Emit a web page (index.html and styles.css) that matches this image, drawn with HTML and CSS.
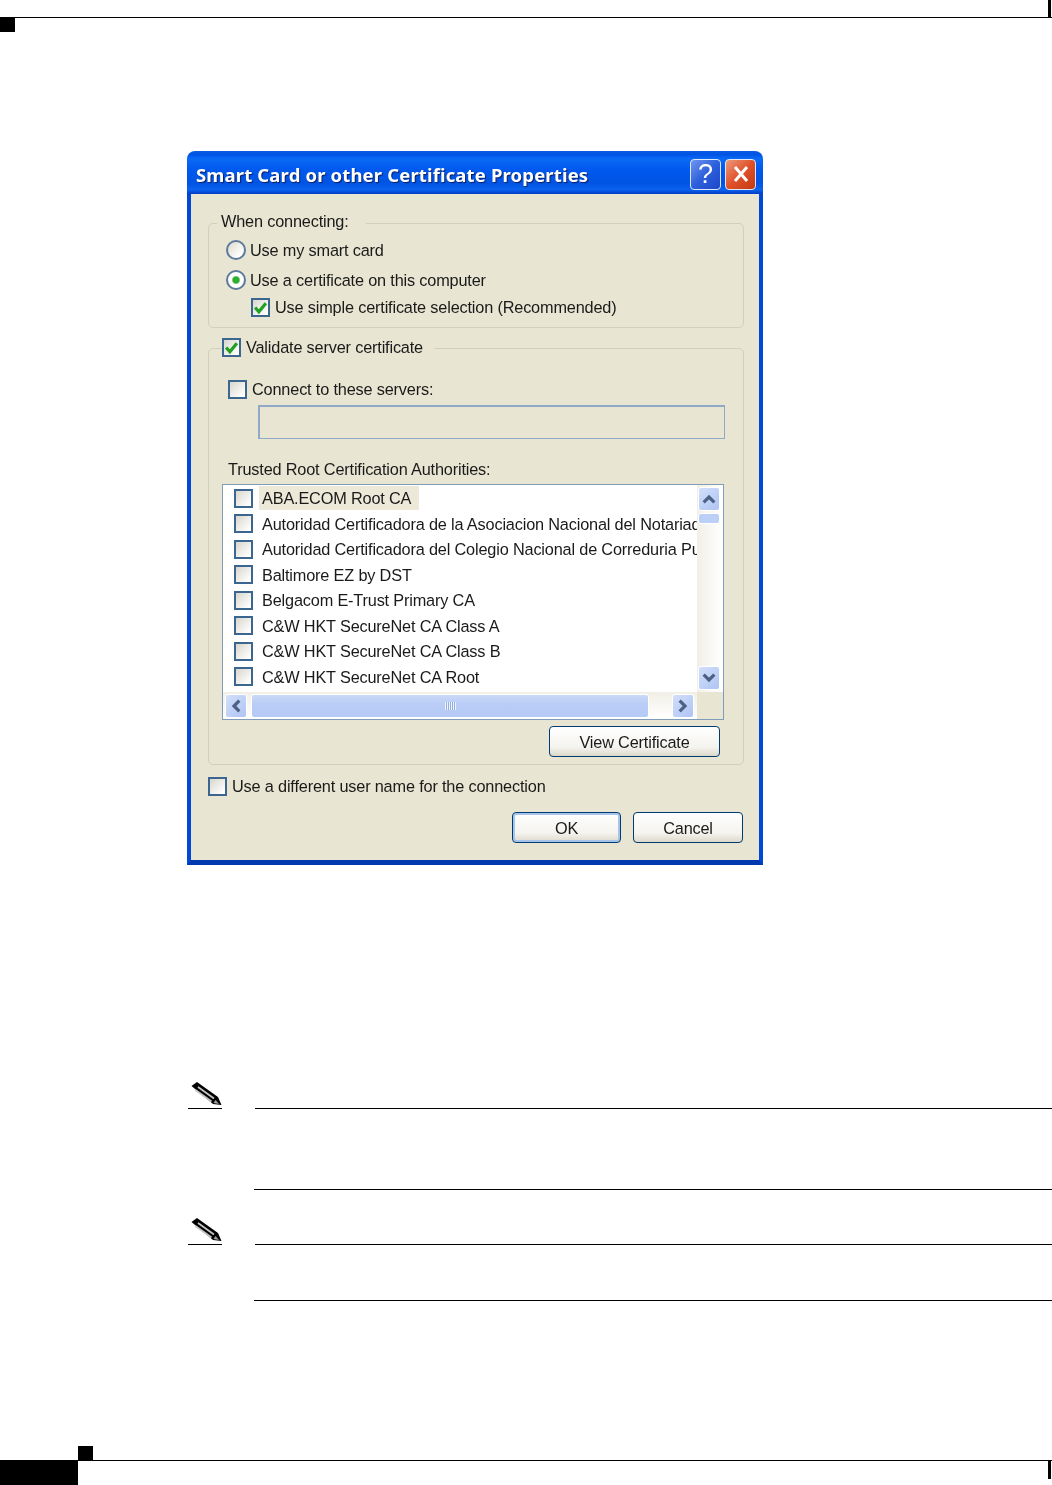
FILE: index.html
```html
<!DOCTYPE html>
<html lang="en">
<head>
  <meta charset="UTF-8">
  <meta name="viewport" content="width=device-width, initial-scale=1.0">
  <title>Smart Card or other Certificate Properties</title>
  <link rel="stylesheet" href="styles.css">
</head>
<body>
  <svg class="defs" width="0" height="0">
    <symbol id="tick" viewBox="0 0 14 14">
      <path d="M2 7 L5.5 11 L12 3" fill="none" stroke="#21a121" stroke-width="3"/>
    </symbol>
    <symbol id="pencil" viewBox="0 0 34 26">
      <path d="M3.500 4 L9 0 L30 15 L33.500 23 L25 22 Z" fill="#000"/>
      <path d="M10 5 L26 16.500 M7.500 8 L23.500 19.500" stroke="#c4c4c4" stroke-width="1.800" fill="none"/>
      <path d="M27.500 18 L31 22 L25.500 21 Z" fill="#a0a0a0"/>
    </symbol>
    <symbol id="chev" viewBox="0 0 12 12">
      <path d="M2 8.500 L6 4.500 L10 8.500" fill="none" stroke="#4d6185" stroke-width="2.400"/>
    </symbol>
  </svg>

  <div class="page-top">
    <div class="top-rule"><span class="tick-mark"></span></div>
    <div class="corner-mark"></div>
  </div>

  <div class="dialog">
    <div class="titlebar">
      <span class="title-text">Smart Card or other Certificate Properties</span>
      <span class="title-btn title-help">?</span>
      <span class="title-btn title-close">
        <svg width="20" height="20" viewBox="0 0 20 20"><path d="M4 3 L16 17 M16 3 L4 17" stroke="#fff" stroke-width="3"/></svg>
      </span>
    </div>

    <div class="client">
      <div class="group">
        <div class="group-title plain">When connecting:</div>
        <div class="opt opt-smart"><span class="radio"></span>Use my smart card</div>
        <div class="opt opt-cert"><span class="radio selected"></span>Use a certificate on this computer</div>
        <div class="opt opt-simple"><span class="check"><svg><use href="#tick"/></svg></span>Use simple certificate selection (Recommended)</div>
      </div>

      <div class="group group-server">
        <div class="group-title opt"><span class="check"><svg><use href="#tick"/></svg></span>Validate server certificate</div>
        <div class="opt opt-connect"><span class="check"></span>Connect to these servers:</div>
        <div class="server-input"></div>
        <div class="list-label">Trusted Root Certification Authorities:</div>

        <div class="list-box">
          <div class="list-rows">
            <div class="list-row"><span class="check"></span><span class="row-text current">ABA.ECOM Root CA</span></div>
            <div class="list-row"><span class="check"></span><span class="row-text">Autoridad Certificadora de la Asociacion Nacional del Notariado</span></div>
            <div class="list-row"><span class="check"></span><span class="row-text">Autoridad Certificadora del Colegio Nacional de Correduria Publica</span></div>
            <div class="list-row"><span class="check"></span><span class="row-text">Baltimore EZ by DST</span></div>
            <div class="list-row"><span class="check"></span><span class="row-text">Belgacom E-Trust Primary CA</span></div>
            <div class="list-row"><span class="check"></span><span class="row-text">C&amp;W HKT SecureNet CA Class A</span></div>
            <div class="list-row"><span class="check"></span><span class="row-text">C&amp;W HKT SecureNet CA Class B</span></div>
            <div class="list-row"><span class="check"></span><span class="row-text">C&amp;W HKT SecureNet CA Root</span></div>
          </div>
          <div class="vscroll">
            <span class="sb-btn sb-up"><svg><use href="#chev"/></svg></span>
            <span class="sb-thumb-v"></span>
            <span class="sb-btn sb-down"><svg><use href="#chev"/></svg></span>
          </div>
          <div class="hscroll">
            <span class="sb-btn sb-left"><svg><use href="#chev"/></svg></span>
            <span class="sb-thumb-h"><span class="grip"></span></span>
            <span class="sb-btn sb-right"><svg><use href="#chev"/></svg></span>
          </div>
          <div class="sb-corner"></div>
        </div>

        <div class="view-row"><span class="btn btn-view">View Certificate</span></div>
      </div>

      <div class="opt opt-user"><span class="check"></span>Use a different user name for the connection</div>

      <div class="dialog-actions">
        <span class="btn btn-ok">OK</span>
        <span class="btn btn-cancel">Cancel</span>
      </div>
    </div>
  </div>

  <div class="note note-first">
    <div class="note-head">
      <div class="note-icon"><svg width="34" height="26"><use href="#pencil"/></svg></div>
      <div class="note-rule"></div>
    </div>
    <div class="note-body note-body-tall"></div>
  </div>

  <div class="note note-second">
    <div class="note-head">
      <div class="note-icon"><svg width="34" height="26"><use href="#pencil"/></svg></div>
      <div class="note-rule"></div>
    </div>
    <div class="note-body note-body-short"></div>
  </div>

  <div class="page-bottom">
    <div class="corner-mark bottom-mark"></div>
    <div class="bottom-row">
      <div class="page-tab"></div>
      <div class="bottom-rule"><span class="tick-mark"></span></div>
    </div>
  </div>
</body>
</html>
```

FILE: styles.css
```css
* {
  margin: 0;
  padding: 0;
  box-sizing: border-box;
}

html, body {
  height: 1485px;
  overflow: hidden;
}

body {
  display: flex;
  flex-direction: column;
  background: #fff;
  font-family: "Liberation Sans", sans-serif;
  color: #000;
}

.defs {
  position: absolute;
}

/* page furniture */
.page-top {
  height: 32px;
}

.top-rule {
  display: flex;
  justify-content: flex-end;
  height: 18px;
  border-bottom: 1px solid #000;
}

.tick-mark {
  display: block;
  width: 3px;
  height: 18px;
  margin-right: 1px;
  background: #000;
}

.corner-mark {
  width: 15px;
  height: 14px;
  background: #000;
}

.page-bottom {
  margin-top: auto;
  height: 39px;
}

.bottom-mark {
  margin-left: 78px;
}

.bottom-row {
  display: flex;
  height: 25px;
}

.page-tab {
  width: 78px;
  background: #000;
}

.bottom-rule {
  flex: 1;
  display: flex;
  justify-content: flex-end;
  border-top: 1px solid #000;
}

/* dialog window */
.dialog {
  width: 576px;
  height: 714px;
  margin: 119px 0 0 187px;
  filter: blur(0.4px);
}

.titlebar {
  display: flex;
  align-items: center;
  height: 43px;
  padding: 3px 7px 0 9px;
  border-radius: 8px 8px 0 0;
  background: linear-gradient(180deg, #0a5de0 0%, #0053e4 8%, #0a6af5 18%, #0058ee 45%, #0054e3 75%, #0a62ee 90%, #003dc4 100%);
}

.title-text {
  flex: 1;
  font-family: "Noto Sans", "Liberation Sans", sans-serif;
  font-size: 18.500px;
  font-weight: 700;
  letter-spacing: 0.15px;
  color: #fff;
  text-shadow: 1px 1px 1px #0f1f5f;
  white-space: nowrap;
}

.title-btn {
  display: flex;
  align-items: center;
  justify-content: center;
  width: 31px;
  height: 31px;
  border: 1px solid #dfe8fb;
  border-radius: 4px;
  color: #fff;
}

.title-help {
  margin-right: 4px;
  font-size: 27px;
  background: linear-gradient(135deg, #6f97ee 0%, #2d5fdc 50%, #1c46c8 100%);
}

.title-close {
  background: linear-gradient(135deg, #ec9a7c 0%, #e0512a 50%, #c23a12 100%);
}

.client {
  height: 671px;
  padding: 29px 15px 0 17px;
  background: #e8e5d2;
  border: solid #0049d6;
  border-width: 0 4px 5px 4px;
  border-bottom-color: #0038b0;
  font-size: 16.300px;
  letter-spacing: -0.17px;
  line-height: 20px;
  color: #1a1a1a;
}

/* group boxes */
.group {
  border: 1px solid #d2cfba;
  border-radius: 5px;
  height: 105px;
}

.group-server {
  height: 417px;
  margin-top: 20px;
}

.group-title {
  width: fit-content;
  margin: -13px 0 0 8px;
  background: #e8e5d2;
}

.group-title.plain {
  padding: 0 17px 0 4px;
}

.group-server .group-title {
  margin: -12px 0 0 13px;
  padding-right: 11px;
}

/* options */
.opt {
  display: flex;
  align-items: center;
  white-space: nowrap;
}

.opt-smart {
  margin: 9px 0 0 17px;
}

.opt-cert {
  margin: 10px 0 0 17px;
}

.opt-simple {
  margin: 7px 0 0 42px;
}

.opt-connect {
  margin: 22px 0 0 19px;
}

.opt-user {
  margin-top: 11px;
}

.radio {
  flex: none;
  width: 20px;
  height: 20px;
  margin-right: 4px;
  border: 2px solid #5c7a9c;
  border-radius: 50%;
  background: linear-gradient(135deg, #dcd9cc 0%, #fff 80%);
}

.radio.selected {
  background: radial-gradient(circle, #2fae2f 0 3px, #fff 4.500px);
}

.check {
  flex: none;
  display: flex;
  align-items: center;
  justify-content: center;
  width: 19px;
  height: 19px;
  margin-right: 5px;
  border: 2px solid #3a6690;
  background: linear-gradient(135deg, #d8d6cc 0%, #fff 90%);
}

.check svg {
  width: 15px;
  height: 15px;
}

.server-input {
  width: 467px;
  height: 34px;
  margin: 6px 0 0 49px;
  border: 2px solid #8fa9c6;
  border-right-width: 1px;
  border-bottom-width: 1px;
}

.list-label {
  margin: 20px 0 0 19px;
}

/* list with scrollbars */
.list-box {
  display: grid;
  grid-template-columns: 1fr 26px;
  grid-template-rows: 207px 27px;
  width: 502px;
  height: 236px;
  margin: 5px 0 0 13px;
  border: 1px solid #7f9db9;
  background: #fff;
}

.list-rows {
  padding-top: 0.5px;
  overflow: hidden;
}

.list-row {
  display: flex;
  align-items: center;
  height: 25.500px;
  padding-left: 11px;
  white-space: nowrap;
}

.list-row .check {
  margin-right: 6px;
}

.row-text {
  padding: 0 8px 0 3px;
  line-height: 24px;
}

.row-text.current {
  background: #ece9d8;
}

.vscroll {
  display: flex;
  flex-direction: column;
  align-items: center;
  padding: 2px 2px 2px 0;
  background: linear-gradient(90deg, #f1efe6 0%, #fff 100%);
}

.hscroll {
  display: flex;
  align-items: center;
  padding-left: 2px;
  background: linear-gradient(180deg, #f1efe6 0%, #fff 100%);
}

.sb-corner {
  background: #e8e5d2;
}

.sb-btn {
  display: flex;
  align-items: center;
  justify-content: center;
  width: 22px;
  height: 24px;
  border: 1px solid #fff;
  border-radius: 3px;
  background: linear-gradient(135deg, #d3dffa 0%, #bccff6 60%, #aec4f2 100%);
}

.sb-btn svg {
  width: 16px;
  height: 16px;
}

.sb-down {
  margin-top: auto;
}

.sb-down svg {
  transform: rotate(180deg);
}

.sb-left svg {
  transform: rotate(-90deg);
}

.sb-right {
  margin-left: 23px;
}

.sb-right svg {
  transform: rotate(90deg);
}

.sb-thumb-v {
  width: 22px;
  height: 11px;
  margin-top: 2px;
  border: 1px solid #fff;
  border-radius: 3px;
  background: #bccff6;
}

.sb-thumb-h {
  display: flex;
  align-items: center;
  justify-content: center;
  width: 398px;
  height: 24px;
  margin-left: 4px;
  border: 1px solid #fff;
  border-radius: 3px;
  background: linear-gradient(180deg, #cbd9f8 0%, #b9cdf6 40%, #b4c9f4 100%);
}

.grip {
  width: 11px;
  height: 8px;
  background: repeating-linear-gradient(90deg, #eef3fd 0 1px, #94aee0 1px 2px);
}

/* buttons */
.view-row {
  display: flex;
  justify-content: flex-end;
  margin: 6px 23px 0 0;
}

.dialog-actions {
  display: flex;
  justify-content: flex-end;
  gap: 12px;
  margin: 16px 1px 0 0;
}

.btn {
  display: flex;
  align-items: center;
  justify-content: center;
  height: 31px;
  border: 1px solid #003c74;
  border-radius: 4px;
  background: linear-gradient(180deg, #fff 0%, #f4f3ee 70%, #dcd8ca 100%);
}

.btn-view {
  width: 171px;
}

.btn-ok {
  width: 109px;
  box-shadow: inset 0 0 0 2px #a9c4ea;
}

.btn-cancel {
  width: 110px;
}

/* note blocks below the figure */
.note {
  flex: none;
}

.note-first {
  margin-top: 217px;
}

.note-second {
  margin-top: 28px;
}

.note-head {
  display: flex;
  height: 27px;
}

.note-icon {
  width: 34px;
  margin-left: 188px;
  border-bottom: 1px solid #000;
}

.note-rule {
  flex: 1;
  margin-left: 33px;
  border-bottom: 1px solid #000;
}

.note-body {
  margin-left: 254px;
  border-bottom: 1px solid #000;
}

.note-body-tall {
  height: 81px;
}

.note-body-short {
  height: 56px;
}
```
